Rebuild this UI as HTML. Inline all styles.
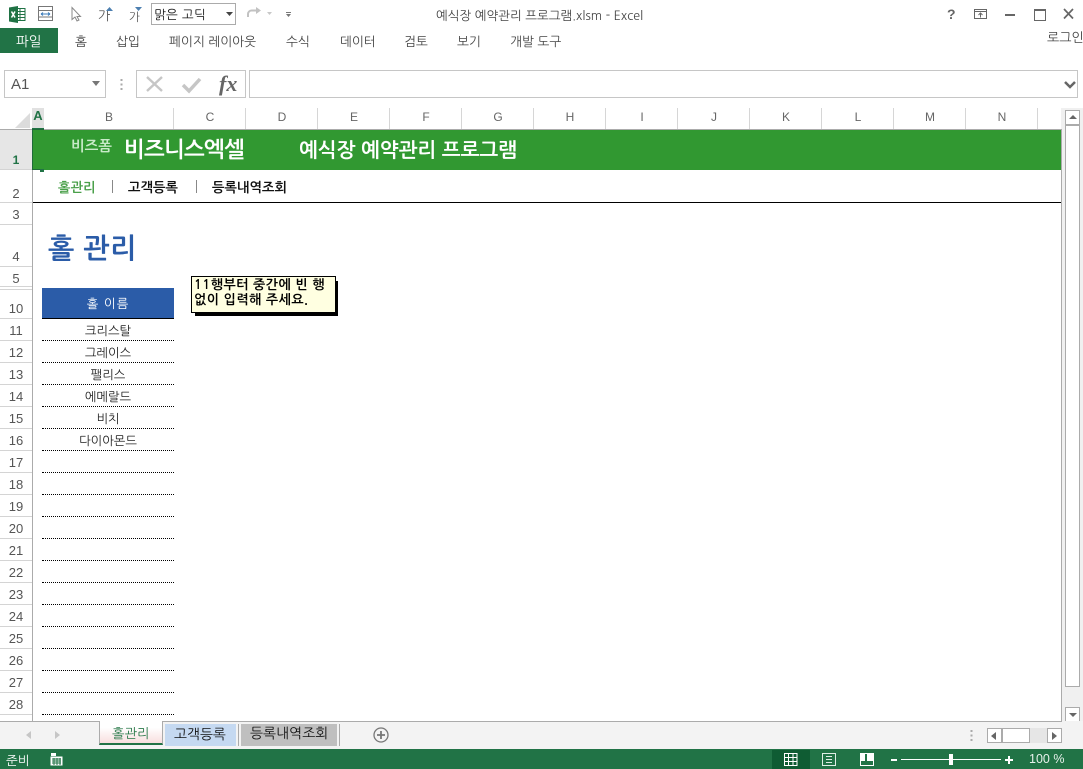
<!DOCTYPE html>
<html lang="ko"><head><meta charset="utf-8"><style>
html,body{margin:0;padding:0;background:#fff}
#p{position:relative;width:1083px;height:769px;overflow:hidden;background:#fff;font-family:"Liberation Sans","Noto Sans CJK KR","NanumGothic",sans-serif;font-size:12px;color:#444}
#p div,#p span.a{position:absolute;white-space:nowrap}
.t{font-family:"NanumGothic","Noto Sans CJK KR",sans-serif;font-size:12.7px;color:#444;line-height:14px}
.ch{top:108px;height:21px;line-height:19px;text-align:center;font-size:12px;color:#666;border-right:1px solid #d6d6d6;box-sizing:border-box;padding-left:1px}
.rh{left:0;width:32px;text-align:center;font-size:13px;color:#555;border-bottom:1px solid #d4d4d4;box-sizing:border-box}
.b{left:42px;width:132px;height:22px;text-align:center;line-height:23px;font-family:"NanumGothic","Noto Sans CJK KR",sans-serif;font-size:12.3px;color:#222;border-bottom:1px dotted #000;box-sizing:border-box}
.nv{top:180px;font-family:'NanumGothic','Noto Sans CJK KR',sans-serif;font-size:13.3px;font-weight:bold;color:#111;line-height:15px}
svg{position:absolute;overflow:visible}
</style></head><body><div id="p">
<!-- title bar -->
<svg style="left:9px;top:6px" width="17" height="17" viewBox="0 0 17 17"><rect x="6.500" y="2.500" width="9.500" height="12" fill="#fff" stroke="#1f7244"/><path d="M11 3v11M7 5.500h9M7 8.500h9M7 11.500h9" stroke="#1f7244" stroke-width="1"/><path d="M0 1.500L9 0v17l-9-1.500z" fill="#1f7244"/><path d="M2.500 5.500l3.500 6M6 5.500l-3.500 6" stroke="#fff" stroke-width="1.500"/></svg>
<svg style="left:38px;top:6px" width="16" height="16" viewBox="0 0 16 16"><rect x=".5" y=".5" width="14" height="14" fill="#fff" stroke="#777"/><path d="M1 4.500h14M1 11h14" stroke="#777"/><path d="M3 8h9M3 8l2-1.500M3 8l2 1.500M12 8l-2-1.500M12 8l-2 1.500" stroke="#3a7ab8" fill="none"/></svg>
<svg style="left:71px;top:7px" width="12" height="16" viewBox="0 0 12 16"><path d="M1 .5v12l3-2.500 2 4 2-1-2-3.500h3.500z" fill="#fff" stroke="#888"/></svg>
<div class="t" style="left:98px;top:9px;font-size:13px;color:#555">가</div>
<svg style="left:106px;top:7px" width="7" height="4"><path d="M0 4l3.500-4 3.500 4z" fill="#4c7fb0"/></svg>
<div class="t" style="left:129px;top:10px;font-size:11.500px;color:#555">가</div>
<svg style="left:135px;top:7px" width="7" height="4"><path d="M0 0l3.500 4 3.500-4z" fill="#4c7fb0"/></svg>
<div style="left:151px;top:3px;width:85px;height:22px;border:1px solid #ababab;box-sizing:border-box;background:#fff"></div>
<div class="t" style="left:154px;top:8px;color:#111;font-size:12.5px;letter-spacing:.3px">맑은 고딕</div>
<svg style="left:226px;top:12px" width="7" height="4"><path d="M0 0h7l-3.500 4z" fill="#444"/></svg>
<svg style="left:246px;top:6px" width="16" height="13" viewBox="0 0 16 13"><path d="M2 11V8a3.500 3.500 0 0 1 3.500-3.500H11" fill="none" stroke="#c2c2c2" stroke-width="2"/><path d="M10 1l5 3.500-5 3.500z" fill="#c2c2c2"/></svg>
<svg style="left:267px;top:12px" width="5" height="3"><path d="M0 0h5l-2.500 3z" fill="#c8c8c8"/></svg>
<svg style="left:286px;top:12px" width="5" height="6"><path d="M0 2h5l-2.500 3z" fill="#777"/><path d="M0 .5h5" stroke="#777"/></svg>
<div class="t" style="left:436px;top:9px;font-size:12.5px;color:#444">예식장 예약관리 프로그램.xlsm - Excel</div>
<div style="left:947px;top:6px;font-size:14px;font-weight:bold;color:#666;line-height:16px">?</div>
<svg style="left:974px;top:9px" width="14" height="11" viewBox="0 0 14 11"><rect x=".5" y=".5" width="12" height="9" fill="none" stroke="#666"/><path d="M1 2.500h12" stroke="#666"/><path d="M6.500 8.500V4.500M4.500 6l2-2 2 2" stroke="#666" fill="none"/></svg>
<div style="left:1005px;top:14px;width:10px;height:2px;background:#666"></div>
<div style="left:1034px;top:9px;width:10px;height:9px;border:1px solid #666;border-top:2px solid #666;box-sizing:content-box"></div>
<svg style="left:1063px;top:9px" width="11" height="10"><path d="M1 0l9 9.500M10 0L1 9.500" stroke="#666" stroke-width="1.700"/></svg>
<!-- ribbon tabs -->
<div style="left:0;top:28px;width:58px;height:25px;background:#217346"></div>
<div class="t" style="left:16px;top:34px;color:#fff;font-size:13.5px">파일</div>
<div class="t" style="left:75px;top:35px">홈</div>
<div class="t" style="left:116px;top:35px">삽입</div>
<div class="t" style="left:169px;top:35px">페이지 레이아웃</div>
<div class="t" style="left:286px;top:35px">수식</div>
<div class="t" style="left:340px;top:35px">데이터</div>
<div class="t" style="left:404px;top:35px">검토</div>
<div class="t" style="left:457px;top:35px">보기</div>
<div class="t" style="left:510px;top:35px">개발 도구</div>
<div class="t" style="left:1047px;top:31px;font-size:13px">로그인</div>
<!-- formula bar -->
<div style="left:4px;top:70px;width:102px;height:28px;border:1px solid #c6c6c6;box-sizing:border-box"></div>
<div style="left:11px;top:76px;font-size:15px;color:#555;line-height:18px">A1</div>
<svg style="left:92px;top:81px" width="8" height="5"><path d="M0 0h8l-4 5z" fill="#777"/></svg>
<svg style="left:120px;top:79px" width="3" height="11"><path d="M1.500 0v2M1.500 4.500v2M1.500 9v2" stroke="#aaa" stroke-width="2"/></svg>
<div style="left:136px;top:70px;width:110px;height:28px;border:1px solid #c6c6c6;box-sizing:border-box"></div>
<svg style="left:146px;top:76px" width="18" height="16"><path d="M1 1l15 14M16 1L1 15" stroke="#c6c6c6" stroke-width="2.400"/></svg>
<svg style="left:182px;top:77px" width="20" height="16"><path d="M1 8l6 6L18 2" fill="none" stroke="#c6c6c6" stroke-width="3.500"/></svg>
<div style="left:219px;top:71px;font-family:'Liberation Serif',serif;font-style:italic;font-weight:bold;font-size:22px;color:#666;line-height:26px">fx</div>
<div style="left:249px;top:70px;width:829px;height:28px;border:1px solid #c6c6c6;box-sizing:border-box"></div>
<svg style="left:1064px;top:81px" width="12" height="8"><path d="M1 1l5 5 5-5" fill="none" stroke="#666" stroke-width="2.500"/></svg>
<!-- col headers -->
<svg style="left:15px;top:113px" width="15" height="15"><path d="M15 0v15H0z" fill="#dcdcdc"/></svg>
<div style="left:32px;top:108px;width:12px;height:21px;background:#e1e1e1"></div>
<div style="left:32px;top:128px;width:12px;height:2px;background:#217346"></div>
<div style="left:32px;top:106px;width:12px;height:22px;line-height:20px;text-align:center;font-size:13px;font-weight:bold;color:#217346">A</div>
<div class="ch" style="left:44px;width:130px">B</div>
<div class="ch" style="left:174px;width:72px">C</div>
<div class="ch" style="left:246px;width:72px">D</div>
<div class="ch" style="left:318px;width:72px">E</div>
<div class="ch" style="left:390px;width:72px">F</div>
<div class="ch" style="left:462px;width:72px">G</div>
<div class="ch" style="left:534px;width:72px">H</div>
<div class="ch" style="left:606px;width:72px">I</div>
<div class="ch" style="left:678px;width:72px">J</div>
<div class="ch" style="left:750px;width:72px">K</div>
<div class="ch" style="left:822px;width:72px">L</div>
<div class="ch" style="left:894px;width:72px">M</div>
<div class="ch" style="left:966px;width:72px">N</div>
<div style="left:0;top:129px;width:1062px;height:1px;background:#ababab"></div>
<div style="left:32px;top:130px;width:1px;height:591px;background:#ababab"></div>
<!-- row headers -->
<div class="rh" style="top:130px;height:40px;background:#e6e6e6;color:#217346;line-height:60px;font-weight:bold;font-size:12px">1</div>
<div class="rh" style="top:170px;height:33px;line-height:47px">2</div>
<div class="rh" style="top:203px;height:22px;line-height:23px">3</div>
<div class="rh" style="top:225px;height:42px;line-height:64px">4</div>
<div class="rh" style="top:267px;height:20px;line-height:24px">5</div>
<div class="rh" style="top:287px;height:3px"></div>
<div class="rh" style="top:290px;height:29px;line-height:38px">10</div>
<div class="rh" style="top:319px;height:22px;line-height:23px">11</div>
<div class="rh" style="top:341px;height:22px;line-height:23px">12</div>
<div class="rh" style="top:363px;height:22px;line-height:23px">13</div>
<div class="rh" style="top:385px;height:22px;line-height:23px">14</div>
<div class="rh" style="top:407px;height:22px;line-height:23px">15</div>
<div class="rh" style="top:429px;height:22px;line-height:23px">16</div>
<div class="rh" style="top:451px;height:22px;line-height:23px">17</div>
<div class="rh" style="top:473px;height:22px;line-height:23px">18</div>
<div class="rh" style="top:495px;height:22px;line-height:23px">19</div>
<div class="rh" style="top:517px;height:22px;line-height:23px">20</div>
<div class="rh" style="top:539px;height:22px;line-height:23px">21</div>
<div class="rh" style="top:561px;height:22px;line-height:23px">22</div>
<div class="rh" style="top:583px;height:22px;line-height:23px">23</div>
<div class="rh" style="top:605px;height:22px;line-height:23px">24</div>
<div class="rh" style="top:627px;height:22px;line-height:23px">25</div>
<div class="rh" style="top:649px;height:22px;line-height:23px">26</div>
<div class="rh" style="top:671px;height:22px;line-height:23px">27</div>
<div class="rh" style="top:693px;height:22px;line-height:23px">28</div>
<!-- sheet -->
<div style="left:32px;top:130px;width:1030px;height:40px;background:#319831"></div>
<div style="left:32px;top:129px;width:12px;height:41px;border:1px solid #1f6b3a;box-sizing:border-box;border-right:0"></div>
<div style="left:40px;top:169px;width:4px;height:3px;background:#217346"></div>
<div style="left:71px;top:138px;font-family:'NanumGothic','Noto Sans CJK KR',sans-serif;font-size:14.500px;font-weight:bold;color:#c8eac8;line-height:18px">비즈폼</div>
<div style="left:124px;top:137px;font-family:'NanumGothic','Noto Sans CJK KR',sans-serif;font-size:22px;font-weight:bold;color:#fff;line-height:26px;letter-spacing:-.7px">비즈니스엑셀</div>
<div style="left:299px;top:139px;font-family:'NanumGothic','Noto Sans CJK KR',sans-serif;font-size:20px;font-weight:bold;color:#fff;line-height:23px">예식장 예약관리 프로그램</div>
<div class="nv" style="left:58px;color:#4aa04a">홀관리</div>
<div style="left:112px;top:180px;width:1px;height:13px;background:#888"></div>
<div class="nv" style="left:128px">고객등록</div>
<div style="left:196px;top:180px;width:1px;height:13px;background:#888"></div>
<div class="nv" style="left:212px">등록내역조회</div>
<div style="left:33px;top:202px;width:1029px;height:1px;background:#000"></div>
<div style="left:48px;top:231px;font-family:'NanumGothic','Noto Sans CJK KR',sans-serif;font-size:28px;font-weight:bold;color:#2b5ca8;line-height:36px;letter-spacing:.5px">홀 관리</div>
<div style="left:42px;top:288px;width:132px;height:31px;background:#2b5ca8;border-bottom:1px solid #000;box-sizing:border-box;color:#fff;text-align:center;line-height:32px;font-family:'NanumGothic','Noto Sans CJK KR',sans-serif;font-size:12.500px;letter-spacing:1px">홀 이름</div>
<div class="b" style="top:319px">크리스탈</div>
<div class="b" style="top:341px">그레이스</div>
<div class="b" style="top:363px">팰리스</div>
<div class="b" style="top:385px">에메랄드</div>
<div class="b" style="top:407px">비치</div>
<div class="b" style="top:429px">다이아몬드</div>
<div class="b" style="top:451px"></div>
<div class="b" style="top:473px"></div>
<div class="b" style="top:495px"></div>
<div class="b" style="top:517px"></div>
<div class="b" style="top:539px"></div>
<div class="b" style="top:561px"></div>
<div class="b" style="top:583px"></div>
<div class="b" style="top:605px"></div>
<div class="b" style="top:627px"></div>
<div class="b" style="top:649px"></div>
<div class="b" style="top:671px"></div>
<div class="b" style="top:693px"></div>
<!-- note -->
<div style="left:195px;top:281px;width:143px;height:35px;background:#000"></div>
<div style="left:191px;top:276px;width:145px;height:37px;background:#ffffe1;border:1px solid #000;box-sizing:border-box"></div>
<div style="left:194px;top:277px;font-family:'NanumGothic','Noto Sans CJK KR',sans-serif;font-size:13px;font-weight:bold;color:#000;line-height:15px;letter-spacing:.5px">11행부터 중간에 빈 행<br>없이 입력해 주세요.</div>
<!-- v scrollbar -->
<div style="left:1061px;top:108px;width:22px;height:615px;background:#f0f0f0"></div>
<div style="left:1061px;top:129px;width:1px;height:593px;background:#ababab"></div>
<div style="left:1065px;top:110px;width:15px;height:15px;border:1px solid #ababab;box-sizing:border-box;background:#fff"></div>
<svg style="left:1069px;top:115px" width="8" height="4"><path d="M0 4l4-4 4 4z" fill="#666"/></svg>
<div style="left:1065px;top:124px;width:15px;height:563px;border:1px solid #ababab;box-sizing:border-box;background:#fff;border-top-width:2px"></div>
<div style="left:1065px;top:707px;width:15px;height:15px;border:1px solid #ababab;box-sizing:border-box;background:#fff"></div>
<svg style="left:1069px;top:713px" width="8" height="4"><path d="M0 0l4 4 4-4z" fill="#666"/></svg>
<!-- tab bar -->
<div style="left:0;top:721px;width:1083px;height:28px;background:#f3f3f3"></div>
<div style="left:0;top:721px;width:1062px;height:1px;background:#ababab"></div>
<svg style="left:26px;top:731px" width="5" height="8"><path d="M5 0v8L0 4z" fill="#c6c6c6"/></svg>
<svg style="left:55px;top:731px" width="5" height="8"><path d="M0 0v8l5-4z" fill="#c6c6c6"/></svg>
<div style="left:99px;top:721px;width:64px;height:24px;background:linear-gradient(#fff 30%,#f8dede);border-left:1px solid #ababab;border-right:1px solid #ababab;border-bottom:2px solid #217346;box-sizing:border-box"></div>
<div class="t" style="left:112px;top:727px;color:#2a7a4a;font-size:13.3px">홀관리</div>
<div style="left:165px;top:724px;width:71px;height:22px;background:#c5d9f1"></div>
<div class="t" style="left:174px;top:727px;color:#111;font-size:13.8px">고객등록</div>
<div style="left:238px;top:724px;width:1px;height:22px;background:#ababab"></div>
<div style="left:241px;top:724px;width:96px;height:22px;background:#bfbfbf"></div>
<div class="t" style="left:250px;top:727px;color:#111;font-size:13.9px">등록내역조회</div>
<div style="left:339px;top:724px;width:1px;height:22px;background:#ababab"></div>
<svg style="left:373px;top:727px" width="16" height="16"><circle cx="8" cy="8" r="7" fill="none" stroke="#777" stroke-width="1.300"/><path d="M8 4v8M4 8h8" stroke="#777" stroke-width="1.800"/></svg>
<svg style="left:970px;top:730px" width="3" height="11"><path d="M1.500 0v2M1.500 4.500v2M1.500 9v2" stroke="#aaa" stroke-width="2"/></svg>
<div style="left:987px;top:728px;width:75px;height:15px;background:#e6e6e6;border:1px solid #ababab;box-sizing:border-box;border-left:0;border-top:0;border-bottom:0;border-right:0"></div>
<div style="left:987px;top:728px;width:15px;height:15px;border:1px solid #ababab;box-sizing:border-box;background:#fff"></div>
<svg style="left:991px;top:732px" width="5" height="8"><path d="M5 0v8L0 4z" fill="#666"/></svg>
<div style="left:1002px;top:728px;width:28px;height:15px;border:1px solid #ababab;box-sizing:border-box;background:#fff"></div>
<div style="left:1047px;top:728px;width:15px;height:15px;border:1px solid #ababab;box-sizing:border-box;background:#fff"></div>
<svg style="left:1052px;top:732px" width="5" height="8"><path d="M0 0v8l5-4z" fill="#666"/></svg>
<!-- status bar -->
<div style="left:0;top:749px;width:1083px;height:20px;background:#217346"></div>
<div class="t" style="left:6px;top:754px;color:#fff;font-size:12.5px">준비</div>
<svg style="left:50px;top:753px" width="14" height="13"><rect x=".5" y="3.500" width="12" height="9" fill="#fff"/><rect x="1" y="0" width="5" height="3" fill="#fff"/><path d="M2 6h9M2 8h9M2 10h9M4 5v7M7 5v7M10 5v7" stroke="#217346"/></svg>
<div style="left:772px;top:750px;width:38px;height:19px;background:#0f5c33"></div>
<svg style="left:784px;top:753px" width="14" height="13"><path d="M.5.500h12.500v12H.5zM.5 4.500h12.500M.5 8.500h12.500M4.500.500v12M9 .5v12" fill="none" stroke="#fff"/></svg>
<svg style="left:822px;top:753px" width="14" height="13"><rect x=".5" y=".5" width="13" height="12" fill="none" stroke="#dfeee5"/><path d="M4 3.500h6M4 6.500h6M4 9.500h6" stroke="#dfeee5"/></svg>
<svg style="left:860px;top:753px" width="14" height="13"><rect x=".5" y=".5" width="13" height="12" fill="none" stroke="#fff"/><rect x="1" y="1" width="4" height="7" fill="#fff"/><rect x="7" y="1" width="6" height="7" fill="#fff"/></svg>
<div style="left:891px;top:759px;width:6px;height:2px;background:#fff"></div>
<div style="left:901px;top:759px;width:100px;height:1px;background:#fff"></div>
<div style="left:949px;top:754px;width:4px;height:11px;background:#fff"></div>
<div style="left:1005px;top:759px;width:8px;height:2px;background:#fff"></div>
<div style="left:1008px;top:756px;width:2px;height:8px;background:#fff"></div>
<div style="left:1029px;top:752px;font-size:12.500px;color:#e6f0ea;line-height:15px">100 %</div>
</div></body></html>
